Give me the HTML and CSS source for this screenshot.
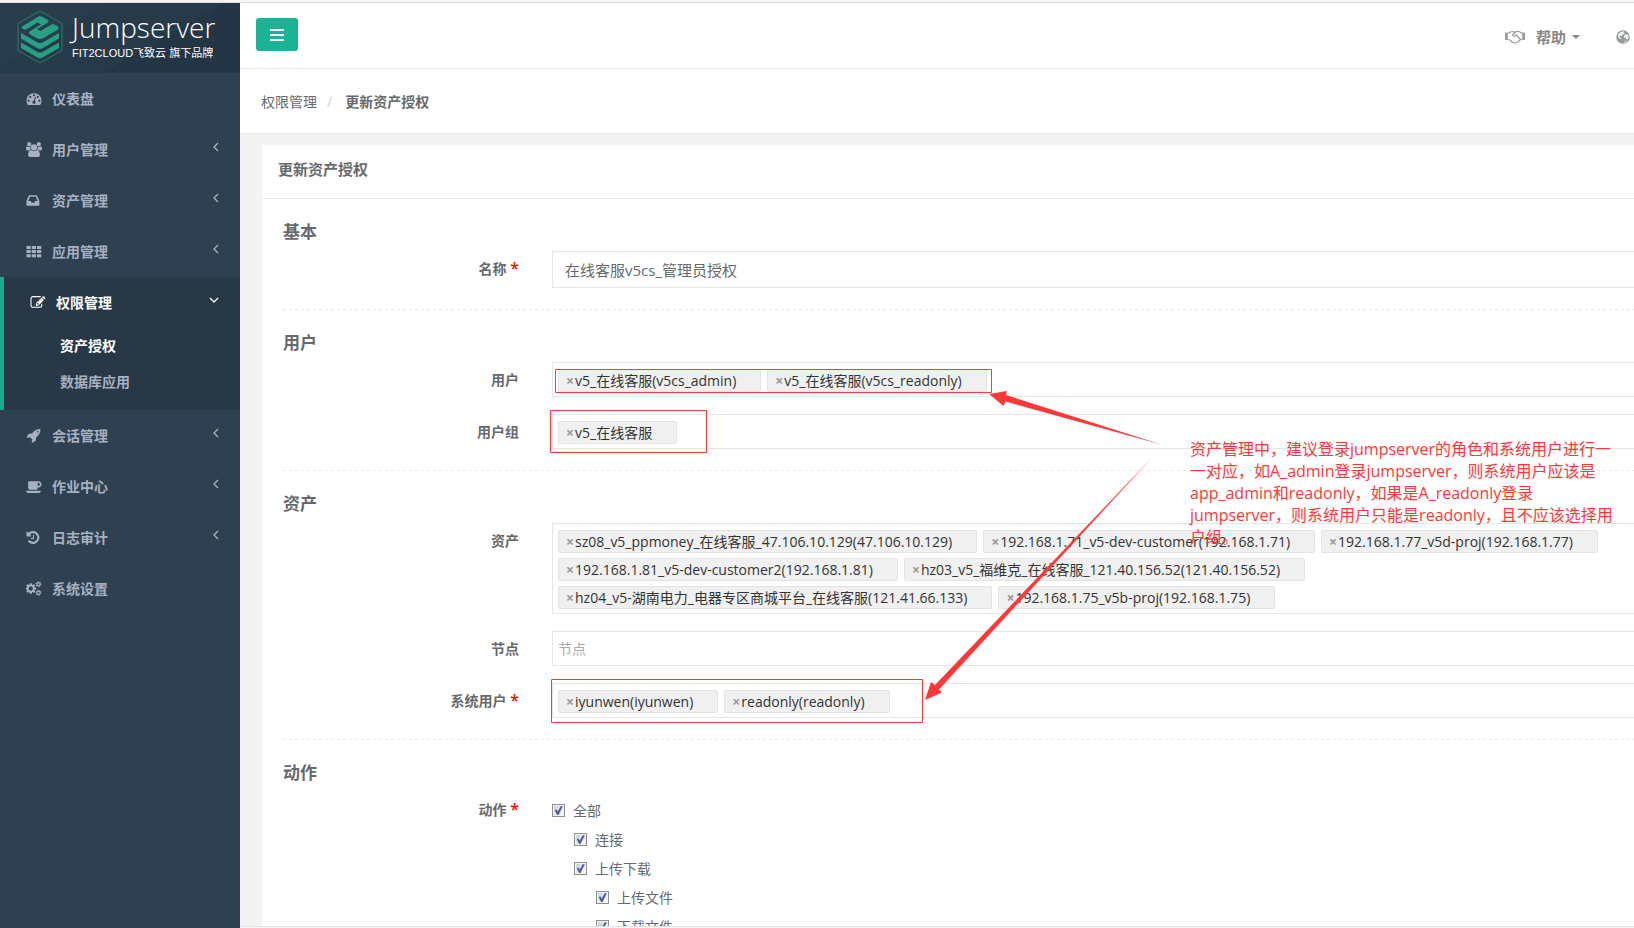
FILE: index.html
```html
<!DOCTYPE html>
<html lang="zh-CN">
<head>
<meta charset="utf-8">
<title>更新资产授权 - Jumpserver</title>
<link rel="stylesheet" href="styles.css">
</head>
<body>
<div class="app">
  <nav class="sidebar" aria-label="主导航">
    <div class="brand">
      <svg class="brand-mark" viewBox="0 0 46 54" aria-hidden="true">
        <path d="M23 1L45 13.500V40.500L23 53L1 40.500V13.500Z" fill="none" stroke="#24806f"/>
        <g fill="#26a183">
          <path d="M5 16.500L21.500 6.500Q23 5.500 24.500 6.500L31 10Q32.500 11.500 31 12.500L20 19L23.500 21L34.500 14.500Q36 13.500 37.500 14.500L41 16.500Q42.500 18 41 19.500L25.500 28.500Q23 29.700 20.500 28.500L12.500 24Q11 22.500 12.500 21.500L24 14.500L20.500 12.500L9.500 19.200Q8 20 6.500 19.200L5 18.500Q3.500 17.500 5 16.500Z"/>
          <path d="M4 23L20.500 32.500Q23 33.700 25.500 32.500L42 23V28.500L25.500 38.300Q23 39.500 20.500 38.300L4 28.500Z"/>
          <path d="M4 32.500L20.500 42Q23 43.200 25.500 42L42 32.500V38L25.500 47.500Q23 48.700 20.500 47.500L4 38Z"/>
        </g>
      </svg>
      <div class="brand-text">
        <span class="brand-name">Jumpserver</span>
        <span class="brand-sub">FIT2CLOUD飞致云 旗下品牌</span>
      </div>
    </div>
    <ul class="menu">
      <li><a class="menu-link" href="#"><svg class="icon" viewBox="0 0 1792 1792"><path d="M384 1152q0-53-37.500-90.500t-90.500-37.500-90.500 37.500-37.500 90.500 37.500 90.500 90.500 37.500 90.500-37.500 37.500-90.500zm192-448q0-53-37.500-90.500t-90.500-37.500-90.500 37.500-37.500 90.500 37.500 90.500 90.500 37.500 90.500-37.500 37.500-90.500zm428 481l101-382q6-26-7.500-48.500t-38.500-29.500-48 6.500-30 39.500l-101 382q-60 5-107 43.500t-63 98.500q-20 77 20 146t117 89 146-20 89-117q16-60-6-117t-72-91zm660-33q0-53-37.500-90.500t-90.500-37.500-90.500 37.500-37.500 90.500 37.500 90.500 90.500 37.500 90.500-37.500 37.500-90.500zm-640-640q0-53-37.500-90.500t-90.500-37.500-90.500 37.500-37.500 90.500 37.500 90.500 90.500 37.500 90.500-37.500 37.500-90.500zm448 192q0-53-37.500-90.500t-90.500-37.500-90.500 37.500-37.500 90.500 37.500 90.500 90.500 37.500 90.500-37.500 37.500-90.500zm320 448q0 261-141 483-19 29-54 29h-1402q-35 0-54-29-141-221-141-483 0-182 71-348t191-286 286-191 348-71 348 71 286 191 191 286 71 348z"/></svg><span>仪表盘</span></a></li>
      <li><a class="menu-link" href="#"><svg class="icon" viewBox="0 0 1920 1792"><path d="M593 896q-162 5-265 128h-134q-82 0-138-40.500t-56-118.500q0-353 124-353 6 0 43.500 21t97.500 42.500 119 21.500q67 0 133-23-5 37-5 66 0 159 81 256zm1071 637q0 120-73 189.500t-194 69.500h-874q-121 0-194-69.500t-73-189.500q0-53 3.500-103.500t14-109 26.500-108.500 43-97.500 62-81 85.500-53.500 111.500-20q10 0 43 21.500t73 48 107 48 135 21.500 135-21.500 107-48 73-48 43-21.500q61 0 111.500 20t85.500 53.500 62 81 43 97.500 26.500 108.500 14 109 3.500 103.500zm-1024-1277q0 106-75 181t-181 75-181-75-75-181 75-181 181-75 181 75 75 181zm704 384q0 159-112.500 271.500t-271.500 112.500-271.500-112.500-112.500-271.500 112.500-271.500 271.500-112.500 271.500 112.500 112.500 271.500zm576 225q0 78-56 118.500t-138 40.500h-134q-103-123-265-128 81-97 81-256 0-29-5-66 66 23 133 23 59 0 119-21.500t97.500-42.500 43.500-21q124 0 124 353zm-128-609q0 106-75 181t-181 75-181-75-75-181 75-181 181-75 181 75 75 181z"/></svg><span>用户管理</span><svg class="chevron" viewBox="0 0 8 10"><path d="M6 1L2 5L6 9"/></svg></a></li>
      <li><a class="menu-link" href="#"><svg class="icon" viewBox="128 0 1792 1792"><path d="M1151 960h316q-1-3-2.500-8t-2.500-8l-212-496h-708l-212 496q-1 2-2.500 8t-2.500 8h316l95 192h320zm513 30v482q0 26-19 45t-45 19h-1408q-26 0-45-19t-19-45v-482q0-62 25-123l238-552q10-25 36.500-42t52.500-17h832q26 0 52.500 17t36.500 42l238 552q25 61 25 123z"/></svg><span>资产管理</span><svg class="chevron" viewBox="0 0 8 10"><path d="M6 1L2 5L6 9"/></svg></a></li>
      <li><a class="menu-link" href="#"><svg class="icon" viewBox="0 0 16 16"><path d="M0 2h4.500v3.300H0zM5.600 2h4.500v3.300H5.600zM11.200 2h4.500v3.300h-4.500zM0 6.400h4.500v3.300H0zM5.600 6.400h4.500v3.300H5.600zM11.200 6.400h4.500v3.300h-4.500zM0 10.800h4.500v3.300H0zM5.600 10.800h4.500v3.300H5.600zM11.200 10.800h4.500v3.300h-4.500z"/></svg><span>应用管理</span><svg class="chevron" viewBox="0 0 8 10"><path d="M6 1L2 5L6 9"/></svg></a></li>
      <li class="menu-open">
        <a class="menu-link" href="#"><svg class="icon" viewBox="0 0 1792 1792"><path d="M888 1184l116-116-152-152-116 116v56h96v96h56zm440-720q-16-16-33 1l-350 350q-17 17-1 33t33-1l350-350q17-17 1-33zm80 594v190q0 119-84.500 203.500t-203.500 84.500h-832q-119 0-203.500-84.500t-84.500-203.500v-832q0-119 84.500-203.500t203.500-84.500h832q63 0 117 25 15 7 18 23 3 17-9 29l-49 49q-14 14-32 8-23-6-45-6h-832q-66 0-113 47t-47 113v832q0 66 47 113t113 47h832q66 0 113-47t47-113v-126q0-13 9-22l64-64q15-15 35-7t20 29zm-96-738l288 288-672 672h-288v-288zm444 132l-92 92-288-288 92-92q28-28 68-28t68 28l152 152q28 28 28 68t-28 68z"/></svg><span>权限管理</span><svg class="chevron" viewBox="0 0 10 10"><path d="M1 3L5 7L9 3"/></svg></a>
        <ul class="submenu">
          <li><a class="submenu-link current" href="#" aria-current="page">资产授权</a></li>
          <li><a class="submenu-link" href="#">数据库应用</a></li>
        </ul>
      </li>
      <li><a class="menu-link" href="#"><svg class="icon" viewBox="0 0 1792 1792"><path d="M1440 448q0-40-28-68t-68-28-68 28-28 68 28 68 68 28 68-28 28-68zm224-288q0 249-75.500 430.500t-253.500 360.500q-81 80-195 176l-20 379q-2 16-16 26l-384 224q-7 4-16 4-12 0-23-9l-64-64q-13-14-8-32l85-276-281-281-276 85q-3 1-9 1-14 0-23-9l-64-64q-17-19-5-39l224-384q10-14 26-16l379-20q96-114 176-195 188-187 358-258t431-71q14 0 24 9.500t10 22.500z"/></svg><span>会话管理</span><svg class="chevron" viewBox="0 0 8 10"><path d="M6 1L2 5L6 9"/></svg></a></li>
      <li><a class="menu-link" href="#"><svg class="icon" viewBox="0 0 1920 1792"><path d="M1664 640q0-80-56-136t-136-56h-64v384h64q80 0 136-56t56-136zm-1664 768h1792q0 106-75 181t-181 75h-1280q-106 0-181-75t-75-181zm1856-768q0 159-112.500 271.500t-271.500 112.500h-64v32q0 92-66 158t-158 66h-704q-92 0-158-66t-66-158v-736q0-26 19-45t45-19h1152q159 0 271.500 112.500t112.500 271.500z"/></svg><span>作业中心</span><svg class="chevron" viewBox="0 0 8 10"><path d="M6 1L2 5L6 9"/></svg></a></li>
      <li><a class="menu-link" href="#"><svg class="icon" viewBox="128 0 1792 1792"><path d="M1664 896q0 156-61 298t-164 245-245 164-298 61q-172 0-327-72.500t-264-204.500q-7-10-6.500-22.500t8.500-20.500l137-138q10-9 25-9 16 2 23 12 73 95 179 147t225 52q104 0 198.500-40.500t163.500-109.500 109.500-163.500 40.500-198.500-40.500-198.500-109.500-163.500-163.500-109.500-198.500-40.500q-98 0-188 35.500t-160 101.500l137 138q31 30 14 69-17 40-59 40h-448q-26 0-45-19t-19-45v-448q0-42 40-59 39-17 69 14l130 129q107-101 244.500-156.500t284.500-55.500q156 0 298 61t245 164 164 245 61 298zm-640-288v448q0 14-9 23t-23 9h-320q-14 0-23-9t-9-23v-64q0-14 9-23t23-9h224v-352q0-14 9-23t23-9h64q14 0 23 9t9 23z"/></svg><span>日志审计</span><svg class="chevron" viewBox="0 0 8 10"><path d="M6 1L2 5L6 9"/></svg></a></li>
      <li><a class="menu-link" href="#"><svg class="icon" viewBox="0 0 1920 1792"><path d="M832 896q0-106-75-181t-181-75-181 75-75 181 75 181 181 75 181-75 75-181zm384-91v185q0 10-7 19.500t-16 10.500l-155 24q-11 35-32 76 34 48 90 115 7 11 7 20 0 12-7 19-23 30-82.500 89.500t-78.500 59.500q-11 0-21-7l-115-90q-37 19-77 31-11 108-23 155-7 24-30 24h-186q-11 0-20-7.500t-10-17.500l-23-153q-34-10-75-31l-118 89q-7 7-20 7-11 0-21-8-144-133-144-160 0-9 7-19 10-14 41-53t47-61q-23-44-35-82l-152-24q-10-1-17-9.500t-7-19.500v-185q0-10 7-19.500t16-10.500l155-24q11-35 32-76-34-48-90-115-7-11-7-20 0-12 7-20 22-30 82-89t79-59q11 0 21 7l115 90q34-18 77-32 11-108 23-154 7-24 30-24h186q11 0 20 7.500t10 17.500l23 153q34 10 75 31l118-89q8-7 20-7 11 0 21 8 144 133 144 160 0 8-7 19-12 16-42 54t-45 60q23 48 34 82l152 23q10 2 17 10.500t7 19.500z"/><g fill="none" stroke="currentColor"><circle cx="1500" cy="384" r="200" stroke-width="150"/><circle cx="1500" cy="384" r="310" stroke-width="110" stroke-dasharray="162 162.600"/><circle cx="1500" cy="1408" r="200" stroke-width="150"/><circle cx="1500" cy="1408" r="310" stroke-width="110" stroke-dasharray="162 162.600"/></g></svg><span>系统设置</span></a></li>
    </ul>
  </nav>

  <div class="main">
    <header class="topbar">
      <button class="toggle" type="button" aria-label="切换菜单"><svg viewBox="0 0 14 12" width="14" height="12"><path d="M0 0h14v2H0zM0 5h14v2H0zM0 10h14v2H0z" fill="#fff"/></svg></button>
      <div class="top-links">
        <a class="top-link" href="#">
          <svg width="20" height="14" viewBox="0 0 20 14" aria-hidden="true"><path d="M0 2.500h2.800v7.500H0zM17.200 2.500H20v7.500h-2.800z" fill="currentColor"/><path d="M3 3.200L5.500 2L7.500 1.500L9.500 2M3 9.500L5 10L7.500 12.500L10.500 13L13 12L15.500 9.500L17 9.500M17 3.200L14 1.500L11 1.500L7.500 5Q8.500 7 10 6L11.500 4.800L15 9" fill="none" stroke="currentColor" stroke-width="1.200" stroke-linejoin="round"/></svg>
          <span>帮助</span><i class="caret"></i>
        </a>
        <a class="top-link" href="#" aria-label="语言"><svg width="14" height="14" viewBox="0 0 14 14" aria-hidden="true"><circle cx="7" cy="7" r="6.800" fill="currentColor"/><path d="M6.500 1.500L8.500 1.200L7.500 2.500L9 3L7 4.500L5.500 6L4 5.500L3.500 7L5 8L5.500 9.500L3 8L1.800 6Q2 3.500 4.500 2.200ZM9.500 4.500L11.500 4L12.700 6.500L12 9L10.500 9.500L9.500 8L8 7.500L8 5.500ZM8.500 11.500L11 10.500L9.500 12.200L8 12.700Z" fill="#fff" opacity=".85"/></svg></a>
      </div>
    </header>

    <ol class="breadcrumb">
      <li><a href="#">权限管理</a></li>
      <li class="crumb-current"><strong>更新资产授权</strong></li>
    </ol>

    <main class="content">
      <section class="panel">
        <h5 class="panel-title">更新资产授权</h5>
        <form class="form">
          <fieldset class="group">
            <h3 class="group-title">基本</h3>
            <div class="field">
              <label class="label" for="name">名称 <span class="req">*</span></label>
              <input class="text-input" id="name" type="text" value="在线客服v5cs_管理员授权">
            </div>
          </fieldset>
          <fieldset class="group">
            <h3 class="group-title">用户</h3>
            <div class="field">
              <span class="label">用户</span>
              <ul class="tags" aria-label="用户">
                <li class="tag"><button type="button" aria-label="移除">×</button>v5_在线客服(v5cs_admin)</li>
                <li class="tag"><button type="button" aria-label="移除">×</button>v5_在线客服(v5cs_readonly)</li>
              </ul>
            </div>
            <div class="field">
              <span class="label">用户组</span>
              <ul class="tags" aria-label="用户组">
                <li class="tag"><button type="button" aria-label="移除">×</button>v5_在线客服</li>
              </ul>
            </div>
          </fieldset>
          <fieldset class="group">
            <h3 class="group-title">资产</h3>
            <div class="field">
              <span class="label">资产</span>
              <ul class="tags" aria-label="资产">
                <li class="tag"><button type="button" aria-label="移除">×</button>sz08_v5_ppmoney_在线客服_47.106.10.129(47.106.10.129)</li>
                <li class="tag"><button type="button" aria-label="移除">×</button>192.168.1.71_v5-dev-customer(192.168.1.71)</li>
                <li class="tag"><button type="button" aria-label="移除">×</button>192.168.1.77_v5d-proj(192.168.1.77)</li>
                <li class="tag"><button type="button" aria-label="移除">×</button>192.168.1.81_v5-dev-customer2(192.168.1.81)</li>
                <li class="tag"><button type="button" aria-label="移除">×</button>hz03_v5_福维克_在线客服_121.40.156.52(121.40.156.52)</li>
                <li class="tag"><button type="button" aria-label="移除">×</button>hz04_v5-湖南电力_电器专区商城平台_在线客服(121.41.66.133)</li>
                <li class="tag"><button type="button" aria-label="移除">×</button>192.168.1.75_v5b-proj(192.168.1.75)</li>
              </ul>
            </div>
            <div class="field">
              <label class="label" for="nodes">节点</label>
              <input class="node-input" id="nodes" type="text" placeholder="节点">
            </div>
            <div class="field">
              <span class="label">系统用户 <span class="req">*</span></span>
              <ul class="tags" aria-label="系统用户">
                <li class="tag"><button type="button" aria-label="移除">×</button>iyunwen(iyunwen)</li>
                <li class="tag"><button type="button" aria-label="移除">×</button>readonly(readonly)</li>
              </ul>
            </div>
          </fieldset>
          <fieldset class="group">
            <h3 class="group-title">动作</h3>
            <div class="field">
              <span class="label">动作 <span class="req">*</span></span>
              <div class="checks">
                <label class="check"><input type="checkbox" checked>全部</label>
                <div class="nested">
                  <label class="check"><input type="checkbox" checked>连接</label>
                  <label class="check"><input type="checkbox" checked>上传下载</label>
                  <div class="nested">
                    <label class="check"><input type="checkbox" checked>上传文件</label>
                    <label class="check"><input type="checkbox" checked>下载文件</label>
                  </div>
                </div>
              </div>
            </div>
          </fieldset>
        </form>
      </section>
    </main>
    <footer class="footer"></footer>
  </div>
</div>

<div class="notes">
  <svg class="notes-shapes" width="1200" height="740" aria-hidden="true">
    <g fill="none" stroke="#fd3838">
      <path d="M555.500 369.500H991.500V392.500H555.500Z"/>
      <path d="M550.500 410.500H706.500V452.500H550.500Z"/>
      <path d="M551.500 679.500H922.500V722.500H551.500Z"/>
    </g>
    <g fill="#fd3838">
      <path d="M989 394L1007 391L1006 395L1162 444.700L1005.500 401.500L1003.500 406Z"/>
      <path d="M925 700L931 682L935 685L1153 456.500L939 689.500L942 692.500Z"/>
    </g>
  </svg>
  <p class="notes-text">资产管理中，建议登录jumpserver的角色和系统用户进行一<br>一对应，如A_admin登录jumpserver，则系统用户应该是<br>app_admin和readonly，如果是A_readonly登录<br>jumpserver，则系统用户只能是readonly，且不应该选择用<br>户组。</p>
</div>
</body>
</html>
```
FILE: styles.css
```css
* { box-sizing: border-box; }

body {
  margin: 0;
  background: #f3f3f4;
  color: #676a6c;
  font: 14px/20px "Open Sans", "Noto Sans CJK SC", sans-serif;
  overflow: hidden;
}

ul, ol { list-style: none; margin: 0; padding: 0; }
a { color: inherit; text-decoration: none; }

.app {
  display: flex;
  height: 100vh;
  padding-top: 3px;
  background: linear-gradient(#f5f5f5 2px, #dedede 2px, #dedede 3px, #f3f3f4 3px);
}

/* Sidebar */
.sidebar {
  flex: none;
  width: 240px;
  background: #2f4050;
  color: #a7b1c2;
  font-weight: 600;
}

.brand {
  display: flex;
  align-items: flex-start;
  gap: 9px;
  height: 70px;
  padding: 7px 0 0 17px;
  background: linear-gradient(150deg, #2a3d4c 0 30%, #273a49 30% 62%, #243646 62%);
}
.brand-mark { width: 46px; height: 54px; }
.brand-text { display: flex; flex-direction: column; color: #fff; white-space: nowrap; }
.brand-name { font-size: 28px; line-height: 34px; font-weight: 300; }
.brand-sub { font: 400 11px/18px "Liberation Sans", "Noto Sans CJK SC", sans-serif; }

.menu-link {
  display: flex;
  align-items: center;
  height: 51px;
  padding: 0 19px 0 26px;
}
.icon { width: 16px; height: 15px; margin-right: 10px; fill: currentColor; }
.chevron {
  width: 10px;
  height: 10px;
  margin: 0 0 6px auto;
  fill: none;
  stroke: currentColor;
  stroke-width: 1.3;
}

.menu-open {
  padding-bottom: 10px;
  border-left: 4px solid #19aa8d;
  background: #293846;
}
.menu-open > .menu-link, .current { color: #fff; }
.menu-open .chevron { margin-right: 2px; }
.submenu-link { display: block; padding-left: 56px; line-height: 36px; }

/* Header */
.main { flex: 1; min-width: 0; display: flex; flex-direction: column; }
.topbar {
  flex: none;
  display: flex;
  align-items: center;
  justify-content: space-between;
  height: 66px;
  padding: 0 4px 2px 16px;
  background: #fff;
  border-bottom: 1px solid #e7eaec;
}
.toggle {
  display: flex;
  align-items: center;
  justify-content: center;
  width: 42px;
  height: 33px;
  padding: 0;
  border: 0;
  border-radius: 3px;
  background: #1ab394;
}
.top-links { display: flex; gap: 36px; padding-top: 4px; color: #999c9e; font-weight: 600; }
.top-link { display: flex; align-items: center; }
.top-link span { margin: 0 6px 0 11px; font-size: 15px; color: #888; }
.caret { border: 4px solid transparent; border-top-color: #888; border-bottom: 0; }

.breadcrumb {
  flex: none;
  display: flex;
  align-items: center;
  height: 65px;
  padding: 2px 0 0 21px;
  background: #fff;
  border-bottom: 1px solid #e7e7e9;
}
.crumb-current::before { content: "/"; padding: 0 13px 0 10px; color: #ccc; }
.crumb-current strong { font-weight: 600; }

/* Panel */
.content { flex: 1; min-height: 0; overflow: hidden; padding: 11px 0 0 22px; }
.panel { background: #fff; }
.panel-title {
  margin: 0;
  padding: 14px 16px 19px;
  border-bottom: 1px solid #e7eaec;
  font-size: 15px;
  font-weight: 600;
}
.form { padding-left: 21px; }
.group { min-width: 0; margin: 0; padding: 0 0 21px; border: 0; }
.group + .group {
  background: repeating-linear-gradient(90deg, #e7eaec 0 3px, transparent 3px 6px) top / 100% 1px no-repeat;
  padding-top: 1px;
}
.group-title { margin: 21px 0 7px; font-size: 17px; line-height: 24px; font-weight: 600; }
.field {
  display: grid;
  grid-template-columns: 236px minmax(0, 1fr);
  column-gap: 33px;
}
.field + .field { margin-top: 17px; }
.label { padding-top: 8px; text-align: right; font-weight: 600; }
.req { color: #f00; font-size: 16px; line-height: 16px; }

.text-input, .node-input, .tags {
  width: 100%;
  border: 1px solid #e5e6e7;
  border-right: 0;
  background: #fff;
}
.text-input { height: 37px; padding: 0 12px 1px; font: inherit; font-size: 15px; color: inherit; }
.node-input { height: 35px; padding: 0 5px 1px; font: inherit; color: #333; }
.node-input::placeholder { color: #aaa; }
.tags { display: flex; flex-wrap: wrap; gap: 5px 6px; padding: 6px 5px 4px; }
.tag {
  height: 23px;
  padding: 0 24px 0 6px;
  border: 1px solid #e4e4e4;
  border-radius: 2px;
  background: #f0f0f0;
  color: #333;
  line-height: 21px;
  white-space: nowrap;
}
.tag button {
  width: 10px;
  padding: 0;
  border: 0;
  background: none;
  color: #999;
  font: 700 14px/20px "Open Sans", sans-serif;
}

.checks { padding-top: 4px; }
.nested { padding-left: 22px; }
.check { display: flex; align-items: center; gap: 8px; height: 29px; }
.check input {
  appearance: none;
  display: grid;
  place-items: center;
  width: 13px;
  height: 13px;
  margin: 0;
  border: 1px solid #8e8f8f;
  background: linear-gradient(135deg, #c4cad4, #f6f6f6 80%);
  box-shadow: inset 0 0 0 1px #f4f4f4;
}
.check input:checked::after {
  content: "";
  width: 9px;
  height: 9px;
  background: #4a5f97;
  clip-path: polygon(8% 45%, 28% 40%, 42% 62%, 75% 2%, 98% 2%, 50% 100%, 34% 100%);
}

.footer { flex: none; height: 2px; border-top: 1px solid #e0e3e8; background: #f5f5f5; }

/* Annotations drawn over the form */
.notes { position: absolute; inset: 0; overflow: hidden; pointer-events: none; }
.notes-shapes { position: absolute; left: 0; top: 0; }
.notes-text {
  position: absolute;
  left: 1190px;
  top: 438px;
  margin: 0;
  color: #fd3838;
  font-size: 16px;
  line-height: 22px;
  white-space: nowrap;
}
```
